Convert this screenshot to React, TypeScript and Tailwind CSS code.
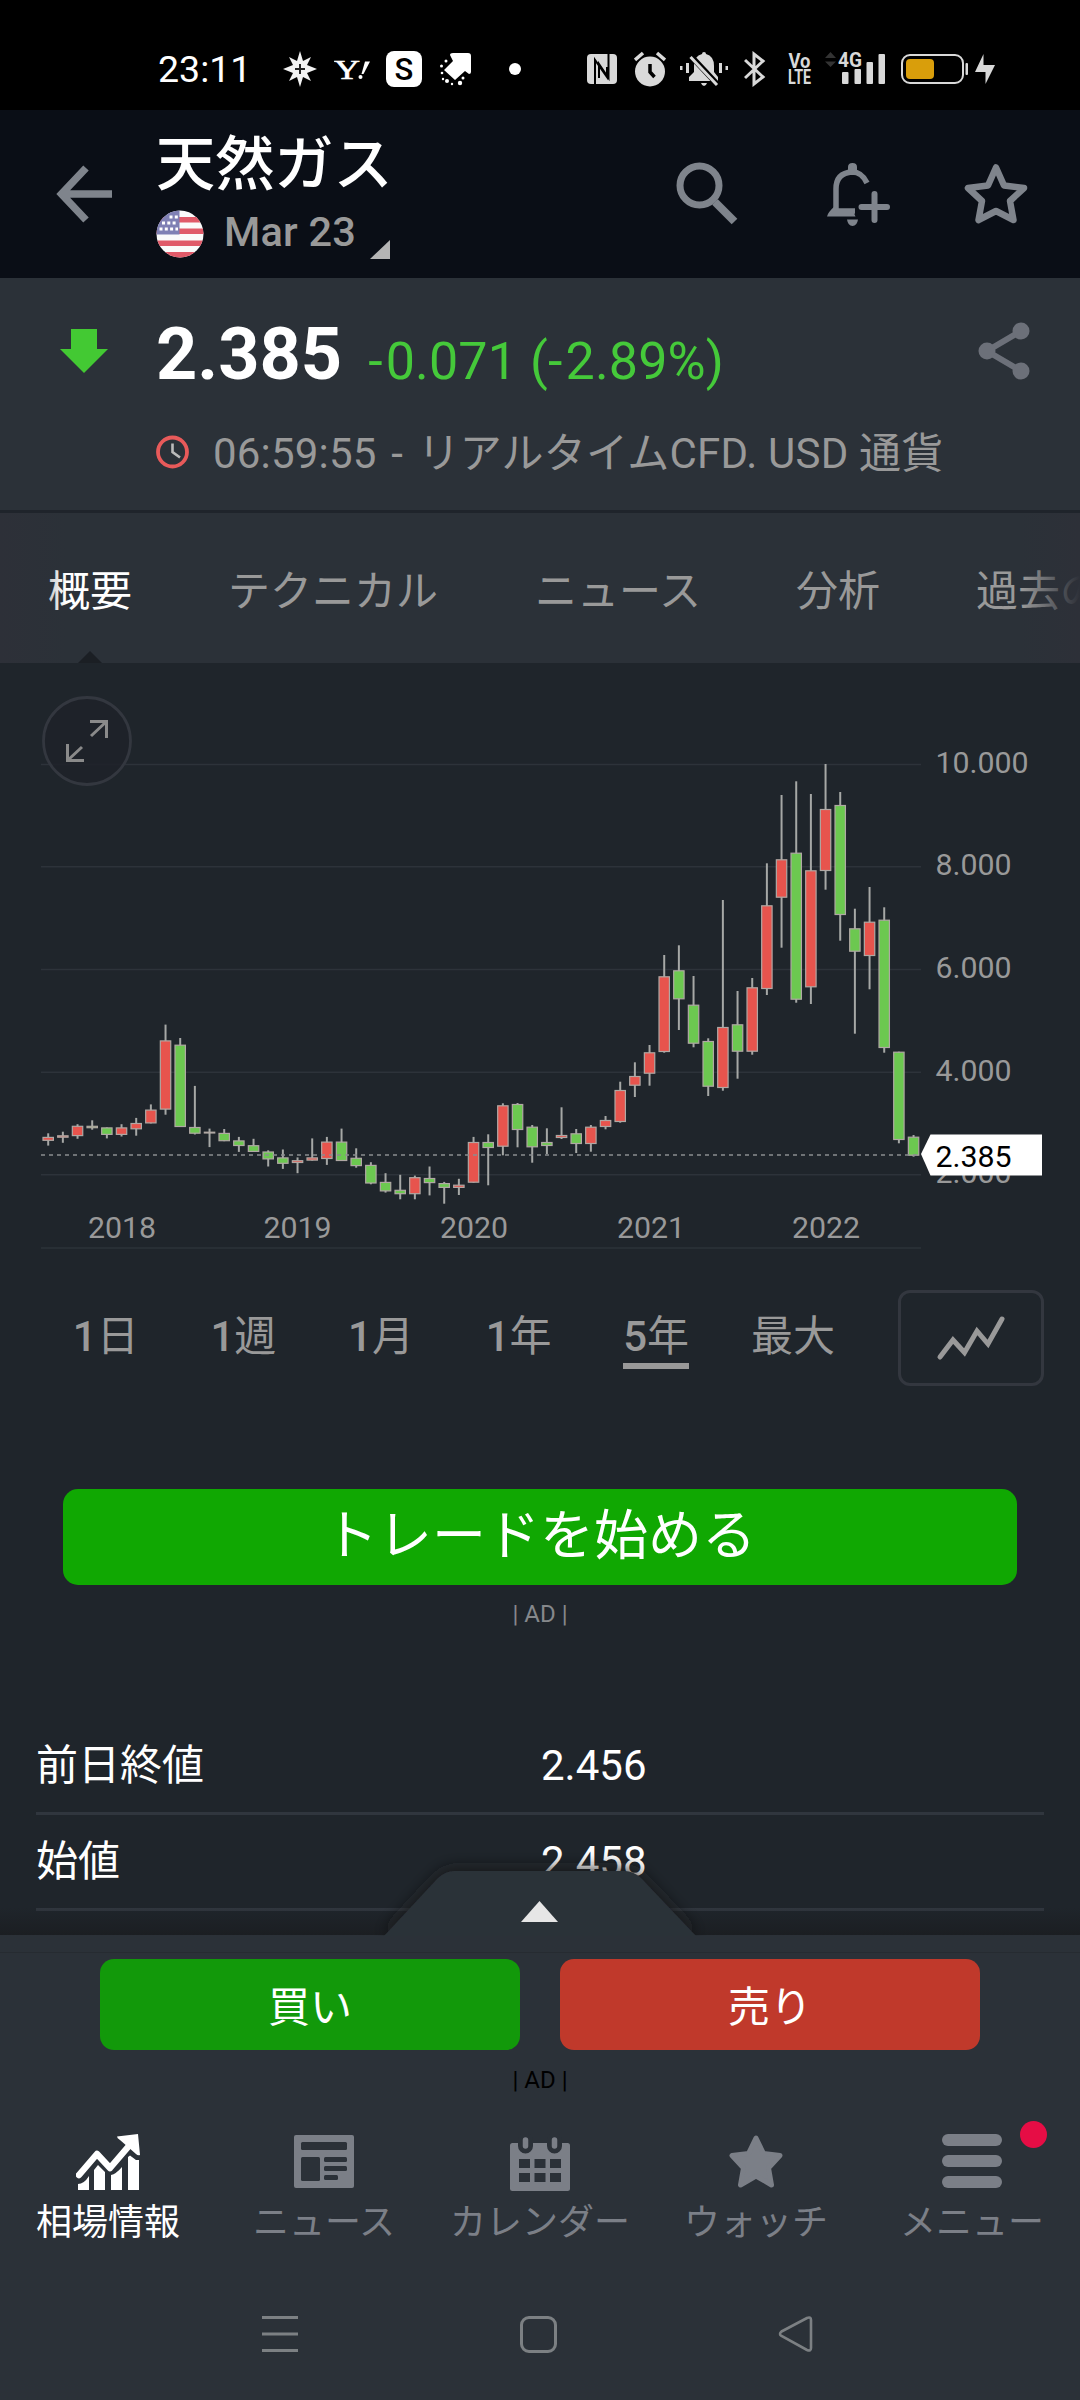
import React, { useState } from 'react';

type Candle = [string, number, number, number, number];

// color, wick top, body top, body bottom, wick bottom (px inside the chart)
const CANDLES: Candle[] = [
  ['r', 393.3, 396.9, 400.8, 405.6],
  ['r', 391.7, 395.3, 397.7, 402.8],
  ['r', 384.2, 385.8, 396.1, 398.8],
  ['g', 380.3, 385.8, 388.2, 389.7],
  ['g', 387.4, 387.4, 394.9, 398.4],
  ['r', 384.2, 387.4, 394.9, 396.5],
  ['r', 377.9, 383, 389.3, 395.7],
  ['r', 364.4, 369.6, 383.4, 383.4],
  ['r', 284.6, 300.4, 369.6, 374.7],
  ['g', 298, 304.7, 387, 387],
  ['g', 345.9, 387, 393.7, 394.5],
  ['g', 388.6, 391.7, 392.9, 407.1],
  ['g', 389, 392.9, 401.2, 401.2],
  ['g', 396.9, 400.4, 406, 411.9],
  ['g', 398.8, 405.2, 411.9, 411.9],
  ['g', 410.3, 411.5, 419.4, 426.5],
  ['g', 409.5, 417.4, 423.8, 428.9],
  ['r', 417.4, 420.2, 423, 433.2],
  ['r', 398.4, 417.4, 420.6, 420.6],
  ['r', 396.9, 401.6, 419, 424.9],
  ['g', 388.6, 401.6, 421, 421],
  ['g', 408.3, 417.8, 426.1, 427.7],
  ['g', 422.2, 424.9, 443.5, 444.3],
  ['g', 433.2, 441.9, 451.4, 452.6],
  ['g', 434.8, 449.8, 454.2, 459.3],
  ['r', 435.6, 437.2, 454.2, 459.3],
  ['g', 426.5, 438, 443.1, 455.4],
  ['g', 441.9, 443.1, 447.9, 463.7],
  ['r', 438.8, 444.7, 447.9, 455],
  ['r', 396.9, 402, 442.7, 442.7],
  ['g', 394.3, 402, 408, 445.3],
  ['r', 363.3, 365.3, 406.7, 415.3],
  ['g', 363, 364, 390, 407.3],
  ['g', 385, 386.7, 407.3, 422.7],
  ['g', 388.3, 402, 406, 414],
  ['r', 367.3, 395, 398, 399],
  ['g', 389, 393.3, 404, 413],
  ['r', 385, 386.7, 404, 411.7],
  ['r', 376, 380, 387, 389.3],
  ['r', 341.7, 350, 382, 382.7],
  ['r', 322.3, 336, 345.7, 357],
  ['r', 305, 312.3, 333.7, 345.7],
  ['r', 215, 236.3, 312, 312.7],
  ['g', 205.3, 230.3, 259.3, 290],
  ['g', 236, 264.7, 303.7, 307.3],
  ['g', 298.3, 301, 346.7, 356],
  ['r', 160, 287, 348, 350.7],
  ['g', 251, 284.3, 311.7, 338.7],
  ['r', 238, 247.3, 311.7, 314.7],
  ['r', 123.3, 165.3, 249, 255],
  ['r', 55, 119.3, 157.7, 207.7],
  ['g', 41.3, 112.7, 259.7, 262.7],
  ['r', 54, 130.3, 247.3, 264],
  ['r', 24, 69, 131, 149.7],
  ['g', 52, 65, 175, 200.7],
  ['g', 168.7, 188.3, 211.7, 293.7],
  ['r', 147, 181.7, 216, 249.3],
  ['g', 167.3, 179.7, 308, 312.7],
  ['g', 311.7, 311.7, 400, 403.3],
  ['g', 395, 396.7, 415.7, 416.7],
];

const PRICES = [
  { label: '10.000', y: 24.5 },
  { label: '8.000', y: 126.7 },
  { label: '6.000', y: 229.5 },
  { label: '4.000', y: 332.3 },
  { label: '2.000', y: 434.7 },
];

const YEARS = [
  { label: '2018', x: 122 },
  { label: '2019', x: 297.5 },
  { label: '2020', x: 474 },
  { label: '2021', x: 651 },
  { label: '2022', x: 826 },
];

const TABS = [
  { label: '概要', gap: 'ml-[48px]' },
  { label: 'テクニカル', gap: 'ml-[96px]' },
  { label: 'ニュース', gap: 'ml-[97px]' },
  { label: '分析', gap: 'ml-[95px]' },
  { label: '過去のデータ', gap: 'ml-[96px]' },
];

const RANGES = [
  { label: '1日', num: '1', unit: '日' },
  { label: '1週', num: '1', unit: '週' },
  { label: '1月', num: '1', unit: '月' },
  { label: '1年', num: '1', unit: '年' },
  { label: '5年', num: '5', unit: '年' },
];

const StatusBar: React.FC = () => (
  <div className="flex h-[110px] items-center bg-black pt-[28px] text-white">
    <div className="ml-[158px] w-[92px] text-[37.500px] leading-[84px]">23:11</div>
    <svg className="ml-[33px]" width="34" height="36" viewBox="-17 -18 34 36">
      <path d="M0-18 3-8 11-12 7-4 17 0 7 4 11 12 3 8 0 18-3 8-11 12-7 4-17 0-7-4-11-12-3-8Z" fill="#f2f2f2" />
      <path d="M0-5V5M-5 0H5" stroke="#222" strokeWidth="2" />
    </svg>
    <svg className="ml-[17px] font-['Liberation_Serif',serif]" width="37" height="36" viewBox="0 0 37 36" fill="#fff">
      <text x="0" y="27.500" textLength="26" lengthAdjust="spacingAndGlyphs" fontSize="28" fontWeight="400" stroke="#fff" strokeWidth="0.600">Y</text>
      <path d="M31 10.500H36L29.500 23H27.500Z" />
      <circle cx="26.500" cy="26" r="2" />
    </svg>
    <div className="ml-[15px] flex h-[36px] w-[36px] items-center justify-center rounded-[8px] bg-white text-[31px] leading-none font-medium text-black">
      S
    </div>
    <svg className="ml-[18px]" width="32" height="34" viewBox="0 0 32 34">
      <path d="M10 3Q10 1 13 1H28Q31 1 31 4V20Q31 22 29 22L25 19 15 28 4 18 13 9Z" fill="#fff" />
      <g fill="#fff">
        <circle cx="1.500" cy="14" r="1.500" />
        <circle cx="6" cy="9" r="1.500" />
        <circle cx="2" cy="21" r="1.300" />
        <circle cx="3" cy="27" r="1.200" />
        <circle cx="7" cy="29" r="2" />
        <circle cx="12" cy="32" r="1.200" />
        <circle cx="20" cy="31" r="2.200" />
        <circle cx="23" cy="26" r="1.500" />
      </g>
    </svg>
    <div className="ml-[37px] h-[12px] w-[12px] rounded-full bg-white" />

    {/* system icons */}
    <svg className="ml-[66px]" width="30" height="30" viewBox="0 0 30 30">
      <rect width="30" height="30" rx="4" fill="#d9d9d9" />
      <path d="M8 30V6L20 23V13M21.500 0V24L12 10V24" fill="none" stroke="#000" strokeWidth="2" />
    </svg>
    <svg className="ml-[17px]" width="32" height="36" viewBox="0 0 32 36">
      <circle cx="16" cy="20.500" r="15" fill="#d9d9d9" />
      <path d="M1 9 9 2M31 9 23 2" stroke="#d9d9d9" strokeWidth="3.500" />
      <path d="M16 13V21L20.500 26" fill="none" stroke="#000" strokeWidth="3.500" />
    </svg>
    <svg className="ml-[14px]" width="48" height="36" viewBox="0 0 48 36" fill="#d9d9d9">
      <path d="M22 3Q22 1 24 1T26 3Q34 5 34 15V21L38 26V30H9V26L14 21V15Q14 5 22 3Z" />
      <path d="M21 32H27Q26 35 24 35T21 32Z" />
      <path d="M0 15h2.500v4H0zM6 12h3v10H6zM39 12h3v10h-3zM45.500 15H48v4h-2.500z" />
      <path d="M9 3 38 34" stroke="#000" strokeWidth="5.500" />
      <path d="M10.500 6 37 34" stroke="#d9d9d9" strokeWidth="3" />
    </svg>
    <svg className="ml-[16px]" width="22" height="36" viewBox="0 0 22 36">
      <path d="M1 9 19 26 10 33V3L19 10 1 27" fill="none" stroke="#d9d9d9" strokeWidth="3" />
    </svg>
    <svg className="ml-[22px]" width="24" height="36" viewBox="0 0 24 36" fill="#d9d9d9" fontWeight="700">
      <text x="0.500" y="17" textLength="22" lengthAdjust="spacingAndGlyphs" fontSize="19.500">Vo</text>
      <text x="0" y="33" textLength="23" lengthAdjust="spacingAndGlyphs" fontSize="19.500">LTE</text>
    </svg>
    <svg className="ml-[13px]" width="62" height="36" viewBox="0 0 62 36">
      <path d="M0 7 5.500 1 11 7ZM0 10.500H11L5.500 16Z" fill="#333" />
      <text x="13" y="16" textLength="24" lengthAdjust="spacingAndGlyphs" fill="#d9d9d9" fontSize="21" fontWeight="700">4G</text>
      <g fill="#d9d9d9">
        <rect x="17" y="21" width="6.500" height="12" rx="1" />
        <rect x="29.500" y="18" width="6.500" height="15" rx="1" />
        <rect x="41.500" y="11" width="6.500" height="22" rx="1" />
        <rect x="53.500" y="3" width="6.500" height="30" rx="1" />
      </g>
    </svg>
    <svg className="ml-[14px]" width="68" height="30" viewBox="0 0 68 30">
      <rect x="1" y="1" width="61" height="28" rx="8" fill="none" stroke="#d9d9d9" strokeWidth="2" />
      <rect x="5" y="5" width="28" height="20" rx="4" fill="#d99e0b" />
      <rect x="64.500" y="9" width="2.500" height="12" rx="1" fill="#d9d9d9" />
    </svg>
    <svg className="ml-[6px]" width="20" height="30" viewBox="0 0 20 30">
      <path d="M8.500 0V11H20L10.500 30V18H0Z" fill="#d9d9d9" />
    </svg>
  </div>
);

const Flag: React.FC = () => (
  <svg width="48" height="48" viewBox="0 0 48 48">
    <clipPath id="flag">
      <circle cx="24" cy="24" r="23.500" />
    </clipPath>
    <g clipPath="url(#flag)">
      <rect width="48" height="48" fill="#fafafa" />
      <path d="M0 7h48v5.500H0zM0 18.500h48V24H0zM0 30.500h48V36H0zM0 42h48v6H0z" fill="#e05a69" />
      <rect width="23.500" height="24.500" fill="#7f80b4" />
      <path d="M13.500 7H22M6 13H20M3.500 19H22" stroke="#fff" strokeWidth="3" strokeDasharray="3 2.300" />
    </g>
  </svg>
);

const Header: React.FC = () => (
  <header className="flex h-[168px] bg-[#0a0e16]">
    <svg className="mt-[55px] ml-[55px]" width="58" height="58" viewBox="0 0 58 58">
      <path d="M31 3 6.500 29 31 55M6 29H57" fill="none" stroke="#7f848c" strokeWidth="7.500" />
    </svg>
    <div className="ml-[43px] w-[300px]">
      <h1 className="mt-[20px] h-[70px] text-[59.200px] leading-[70px] font-medium whitespace-nowrap text-white">天然ガス</h1>
      <div className="mt-[10px] flex h-[48px]">
        <Flag />
        <span className="mt-[-3px] ml-[20px] text-[41.500px] leading-[50px] font-medium tracking-[0.200px] text-[#999]">Mar 23</span>
        <svg className="mt-[30px] ml-[14px]" width="20" height="19" viewBox="0 0 20 19">
          <path d="M20 0V19H0Z" fill="#b5b5b5" />
        </svg>
      </div>
    </div>
    <svg className="mt-[52px] ml-[219px]" width="64" height="64" viewBox="0 0 64 64" fill="none" stroke="#7f848c">
      <circle cx="24.500" cy="23.500" r="19.500" strokeWidth="7" />
      <path d="M40 40 59.500 59.500" strokeWidth="8" />
    </svg>
    <svg className="mt-[52px] ml-[88px]" width="64" height="66" viewBox="0 0 64 66">
      <path d="M40 21Q35 10 25 10 9 11 9 27V49H28" fill="none" stroke="#7f848c" strokeWidth="5.500" />
      <path d="M21 9V5Q21 1 25.500 1T30 5V9ZM0 54.500Q1 50 8 44V49H26L28.500 54.500ZM20 57.500H31Q30 64 25.500 64T20 57.500Z" fill="#7f848c" />
      <path d="M34.500 45H60M47.500 32V58" stroke="#7f848c" strokeWidth="6" strokeLinecap="round" />
    </svg>
    <svg className="mt-[52px] ml-[72px]" width="66" height="64" viewBox="0 0 66 64">
      <path d="M33 5.500 41 23.500 61 26 47 39 50.500 58 33 49 15.500 58 19 39 5 26 25 23.500Z" fill="none" stroke="#7f848c" strokeWidth="6.500" strokeLinejoin="round" />
    </svg>
  </header>
);

const Quote: React.FC = () => (
  <section className="flex h-[235px] border-b-[3px] border-[#1f242b] bg-[#2b3138]">
    <svg className="mt-[51px] ml-[60px]" width="48" height="44" viewBox="0 0 48 44">
      <path d="M11 0H37V20H48L24 44 0 20H11Z" fill="#43c933" />
    </svg>
    <div className="ml-[48px] w-[810px]">
      <div className="mt-[35px] flex h-[84px] items-baseline leading-[84px] whitespace-nowrap">
        <span className="text-[72px] font-bold text-white">2.385</span>
        <span className="ml-[26px] text-[52px] tracking-[0.150px] text-[#45c93a]">
          <span className="mr-[3px]">-</span>0.071 (<span className="mr-[3px]">-</span>2.89%)
        </span>
      </div>
      <div className="mt-[32px] flex h-[50px] items-center text-[42px] leading-[50px] whitespace-nowrap text-[#999]">
        <svg className="mt-[-4px] mr-[24px]" width="33" height="34" viewBox="0 0 33 34" fill="none">
          <circle cx="16.500" cy="17" r="14.500" stroke="#e85a5a" strokeWidth="3.800" />
          <path d="M16.500 8.500V17L24 22.500" stroke="#bbb" strokeWidth="2.600" />
        </svg>
        <span className="tracking-[0.200px]">
          06:59:55 <span className="mr-[4px] ml-[4px]">-</span> リアルタイムCFD. USD 通貨
        </span>
      </div>
    </div>
    <svg className="mt-[43px] ml-[11px]" width="54" height="60" viewBox="0 0 54 60">
      <path d="M44 10 10 30 44 50" fill="none" stroke="#6c7079" strokeWidth="6" />
      <g fill="#6c7079">
        <circle cx="44" cy="10" r="8.500" />
        <circle cx="10" cy="30" r="8.500" />
        <circle cx="44" cy="50" r="8.500" />
      </g>
    </svg>
  </section>
);

const Chart: React.FC = () => (
  <svg className="block" width="1080" height="597" viewBox="0 -77 1080 597">
    <g stroke="#2d333a" strokeWidth="1.600">
      {PRICES.map((p) => (
        <line key={p.label} x1="41" x2="921" y1={p.y} y2={p.y} />
      ))}
      <line x1="41" x2="921" y1="508" y2="508" />
    </g>
    {CANDLES.map(([color, high, top, bottom, low], i) => {
      const x = 48.2 + i * 14.667;
      return (
        <g key={i}>
          <line x1={x} x2={x} y1={high} y2={low} stroke="#a6a8a6" strokeWidth="2" />
          <rect
            x={x - 5.2}
            y={top + 0.5}
            width="10.400"
            height={Math.max(bottom - top - 1, 0.8)}
            fill={color === 'r' ? '#e7544d' : '#6cc850'}
            stroke="#b0a8a4"
            strokeWidth="1.200"
          />
        </g>
      );
    })}
    <line x1="41" x2="921" y1="415" y2="415" stroke="#8a8d90" strokeWidth="1.600" strokeDasharray="4 4" />
    <g fill="#999" fontSize="30.300">
      {PRICES.map((p) => (
        <text key={p.label} x="935.500" y={p.y + 8.6}>{p.label}</text>
      ))}
      {YEARS.map((y) => (
        <text key={y.label} x={y.x} y="498" textAnchor="middle">{y.label}</text>
      ))}
    </g>
    <path d="M921 414 930.500 394.500H1042V435.500H930.500Z" fill="#fff" />
    <text x="935.500" y="426.700" fill="#000" fontSize="30.300">2.385</text>
    {/* fullscreen button */}
    <circle cx="87" cy="1" r="43.500" fill="#1f2229" fillOpacity="0.85" stroke="#33373f" strokeWidth="2.800" />
    <path d="M90-18.500H106.500V-2M106.500-18.500 91-4M67.500 4V20.500H84M67.500 20.500 82 7" fill="none" stroke="#8a8a8a" strokeWidth="3" />
  </svg>
);

const NAV_GRAY = '#7b7f87';

const NAV = [
  {
    label: '相場情報',
    icon: (
      <svg width="64" height="56" viewBox="0 0 64 56">
        <path d="M3 41 21 20 34 34 52 13" fill="none" stroke="#fff" strokeWidth="6.500" strokeLinecap="round" strokeLinejoin="round" />
        <path d="M41 2.500 62 0 64 21Q62 22 60 20L44 6Q41 4 41 2.500Z" fill="#fff" />
        <path d="M2 56V50Q8 50 13 42V56ZM18 56V36L22 31 29 38V56ZM35 56V41Q40 40 46 33V56ZM52 56V23L54 21.500 60 26 63 26V56Z" fill="#fff" />
      </svg>
    ),
  },
  {
    label: 'ニュース',
    icon: (
      <svg width="60" height="56" viewBox="0 0 60 56">
        <rect y="1" width="60" height="53" rx="2" fill={NAV_GRAY} />
        <g fill="#2b3138">
          <rect x="7" y="8" width="46" height="8" rx="1.500" />
          <rect x="7" y="23" width="19" height="24" rx="1.500" />
          <rect x="30" y="23" width="23" height="5" rx="1.500" />
          <rect x="30" y="32" width="23" height="5" rx="1.500" />
          <rect x="30" y="41" width="14" height="5" rx="1.500" />
        </g>
      </svg>
    ),
  },
  {
    label: 'カレンダー',
    icon: (
      <svg width="60" height="57" viewBox="0 0 60 57">
        <rect y="9" width="60" height="48" rx="2.500" fill={NAV_GRAY} />
        <path d="M15.500 6V12M44.500 6V12" stroke="#2b3138" strokeWidth="15" strokeLinecap="round" />
        <path d="M15.500 6V12M44.500 6V12" stroke={NAV_GRAY} strokeWidth="5.500" strokeLinecap="round" />
        <path d="M9 25h11v9H9zM24.500 25h11v9h-11zM40 25h11v9H40zM9 39h11v9H9zM24.500 39h11v9h-11zM40 39h11v9H40z" fill="#2b3138" />
      </svg>
    ),
  },
  {
    label: 'ウォッチ',
    icon: (
      <svg width="56" height="56" viewBox="0 0 56 56">
        <path d="M28 4 35.500 19.500 52 21.500 40.500 34 43.500 51 28 42 12.500 51 15.500 34 4 21.500 20.500 19.500Z" fill={NAV_GRAY} stroke={NAV_GRAY} strokeWidth="5" strokeLinejoin="round" />
      </svg>
    ),
  },
  {
    label: 'メニュー',
    icon: (
      <svg width="60" height="56" viewBox="0 0 60 56" fill={NAV_GRAY}>
        <rect y="0" width="60" height="12" rx="6" />
        <rect y="21" width="60" height="12" rx="6" />
        <rect y="42" width="60" height="12" rx="6" />
      </svg>
    ),
  },
];

const App: React.FC = () => {
  const [tab, setTab] = useState('概要');
  const [range, setRange] = useState('5年');

  return (
    <div className="flex h-[2400px] w-[1080px] flex-col overflow-hidden bg-[#1f252b] font-['Roboto','Noto_Sans_CJK_JP',sans-serif]">
      <StatusBar />
      <Header />
      <Quote />

      {/* Tabs */}
      <nav className="relative flex h-[150px] overflow-hidden bg-[#2b3138] text-[42px] leading-[158px] whitespace-nowrap">
        {TABS.map((t) => (
          <button
            key={t.label}
            onClick={() => setTab(t.label)}
            className={`relative flex shrink-0 justify-center ${t.gap} ${tab === t.label ? 'text-white' : 'text-[#999]'}`}
          >
            {t.label}
            {tab === t.label && (
              <svg className="absolute top-[138px]" width="24" height="12" viewBox="0 0 24 12">
                <path d="M12 0 24 12H0Z" fill="#1b1f24" />
              </svg>
            )}
          </button>
        ))}
        <div className="absolute top-0 left-0 h-full w-[66px] bg-linear-to-r from-[#2d3038] to-transparent" />
        <div className="absolute top-0 right-0 h-full w-[58px] bg-linear-to-l from-[#2d3038] to-transparent" />
      </nav>

      <Chart />

      {/* Range picker */}
      <div className="mt-[30px] flex h-[96px] text-[42px] leading-[93px] text-[#999]">
        <div className="ml-[37px] flex w-[688px]">
          {RANGES.map((r) => (
            <button key={r.label} onClick={() => setRange(r.label)} className="relative flex flex-1 justify-center">
              <span className="font-medium">{r.num}</span>
              {r.unit}
              {range === r.label && <span className="absolute top-[73px] h-[6px] w-[66px] bg-[#999]" />}
            </button>
          ))}
        </div>
        <button className="ml-[25px] h-[93px] w-[86px] text-center whitespace-nowrap">最大</button>
        <button className="ml-[62px] flex h-[96px] w-[146px] items-center justify-center rounded-[12px] border-[3px] border-[#33373f]">
          <svg width="70" height="46" viewBox="0 0 70 46">
            <path d="M4 42 17 25 28.500 37.500 41 16 52 29 66 4" fill="none" stroke="#999" strokeWidth="5" strokeLinecap="round" />
          </svg>
        </button>
      </div>

      <button className="mx-[63px] mt-[103px] h-[96px] shrink-0 rounded-[15px] bg-[#10a802] text-[54px] leading-[96px] text-white">
        トレードを始める
      </button>
      <div className="mt-[14px] h-[30px] text-center text-[24px] leading-[30px] text-[#85888b]">| AD |</div>

      {/* Stats */}
      <div className="mx-[36px] mt-[90px] flex h-[216px] flex-col text-[42px] leading-[93px] text-white">
        <div className="flex h-[96px] border-b-[3px] border-[#30363e]">
          <span className="w-[505px]">前日終値</span>
          <span>2.456</span>
        </div>
        <div className="flex h-[96px] border-b-[3px] border-[#30363e]">
          <span className="w-[505px]">始値</span>
          <span>2.458</span>
        </div>
      </div>

      {/* Bottom sheet */}
      <footer className="relative h-[465px] bg-[#2b3138]">
        <div className="absolute -top-[27px] left-0 h-[27px] w-full bg-linear-to-t from-[#1b1e22] to-transparent" />
        <svg className="absolute -top-[100px] left-[340px]" width="400" height="101" viewBox="0 0 400 101">
          <defs>
            <filter id="shade" x="-20%" y="-40%" width="140%" height="180%">
              <feDropShadow dx="0" dy="-3" stdDeviation="8" floodColor="#15181c" floodOpacity="0.8" />
            </filter>
          </defs>
          <path d="M44 101 98 43Q106 36 114 36H285Q293 36 301 43L356 101Z" fill="#2b3138" filter="url(#shade)" />
          <path d="M199.500 66 218 87H181Z" fill="#e6e6e6" />
        </svg>
        <div className="h-[18px] border-b border-[#262b31]" />
        <div className="flex gap-[40px] px-[100px] pt-[6px] text-[42px] leading-[87px] text-white">
          <button className="h-[91px] flex-1 rounded-[14px] bg-[#12990a] pt-[5px]">買い</button>
          <button className="h-[91px] flex-1 rounded-[14px] bg-[#c0392b] pt-[5px]">売り</button>
        </div>
        <div className="mt-[15px] h-[30px] text-center text-[24px] leading-[30px] text-black">| AD |</div>
        <div className="mt-[39px] grid grid-cols-5">
          {NAV.map((item, i) => (
            <div
              key={item.label}
              className={`relative flex flex-col items-center text-[36px] leading-[44px] whitespace-nowrap ${i === 0 ? 'text-white' : 'text-[#7b7f87]'}`}
            >
              <div className="flex h-[67px] items-start">{item.icon}</div>
              {item.label}
              {i === 4 && <span className="absolute -top-[13px] right-[33px] h-[27px] w-[27px] rounded-full bg-[#e60d45]" />}
            </div>
          ))}
        </div>
        {/* Android navigation */}
        <div className="mt-[69px] flex h-[40px] items-center">
          <svg className="ml-[262px]" width="36" height="38" viewBox="0 0 36 38">
            <path d="M0 2.500H36M0 19H36M0 35.500H36" stroke="#7c8083" strokeWidth="3" />
          </svg>
          <div className="ml-[222px] h-[37px] w-[37px] rounded-[9px] border-[3px] border-[#7c8083]" />
          <svg className="ml-[220px]" width="38" height="38" viewBox="0 0 38 38">
            <path d="M4.500 16.500 30 3Q34 1.500 34 5V33Q34 36.500 30 35L4.500 21Q1.500 19 4.500 16.500Z" fill="none" stroke="#7c8083" strokeWidth="2.600" />
          </svg>
        </div>
      </footer>
    </div>
  );
};

export default App;
